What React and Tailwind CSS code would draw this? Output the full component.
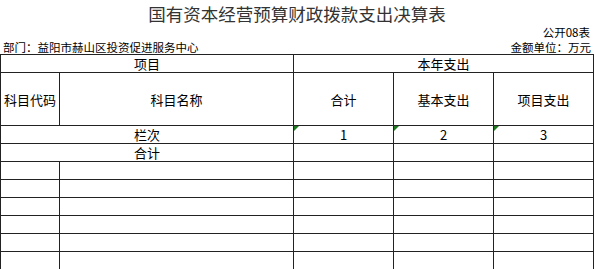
const font = { fontFamily: '"Noto Sans CJK SC", "Liberation Sans", sans-serif' }

const cols = [59, 234, 100, 100, 100]

const Tri = () => (
    <span className="absolute left-0 top-0 h-0 w-0 border-t-[5px] border-r-[5px] border-t-[#1f7a1f] border-r-transparent" />
)

export default function App() {
    const emptyRows = Array.from({ length: 6 })
    const cell = 'border border-[#222] p-0 text-center align-middle'

    return (
        <div className="w-[594px] h-[269px] overflow-hidden bg-white text-black" style={font}>
            <div className="h-[26px] flex items-center justify-center text-[17.5px] text-[#333] leading-none pt-[2px]">
                国有资本经营预算财政拨款支出决算表
            </div>
            <div className="h-[13px] flex items-center justify-end pr-[4px] text-[11.5px] leading-none">
                公开08表
            </div>
            <div className="h-[15px] flex items-end justify-between px-[3px] text-[11.5px] leading-none pb-[1px]">
                <span>部门：益阳市赫山区投资促进服务中心</span>
                <span>金额单位：万元</span>
            </div>
            <table className="border-collapse table-fixed text-[13px] leading-none" style={{ width: 593 }}>
                <colgroup>
                    {cols.map((w, i) => (
                        <col key={i} style={{ width: w }} />
                    ))}
                </colgroup>
                <tbody>
                    <tr className="h-[18px]">
                        <td colSpan={2} className={cell}>项目</td>
                        <td colSpan={3} className={cell}>本年支出</td>
                    </tr>
                    <tr className="h-[53px]">
                        <td className={cell}>科目代码</td>
                        <td className={cell}>科目名称</td>
                        <td className={cell}>合计</td>
                        <td className={cell}>基本支出</td>
                        <td className={cell}>项目支出</td>
                    </tr>
                    <tr className="h-[18px]">
                        <td colSpan={2} className={cell}>栏次</td>
                        <td className={`${cell} relative`}><Tri />1</td>
                        <td className={`${cell} relative`}><Tri />2</td>
                        <td className={`${cell} relative`}><Tri />3</td>
                    </tr>
                    <tr className="h-[18px]">
                        <td colSpan={2} className={cell}>合计</td>
                        <td className={cell}></td>
                        <td className={cell}></td>
                        <td className={cell}></td>
                    </tr>
                    {emptyRows.map((_, r) => (
                        <tr key={r} className="h-[18px]">
                            {cols.map((_, c) => (
                                <td key={c} className={cell}></td>
                            ))}
                        </tr>
                    ))}
                </tbody>
            </table>
        </div>
    )
}
